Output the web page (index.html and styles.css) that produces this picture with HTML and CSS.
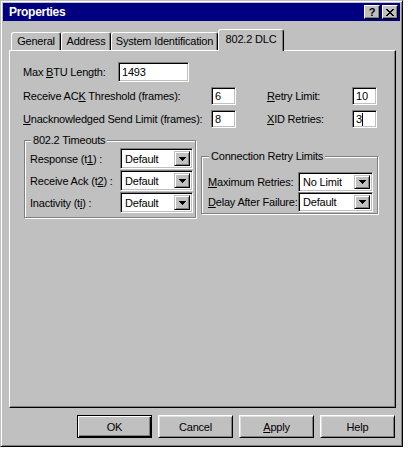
FILE: index.html
```html
<!DOCTYPE html>
<html>
<head>
<meta charset="utf-8">
<title>Properties</title>
<link rel="stylesheet" href="styles.css">
</head>
<body>
<div class="window">
  <div class="titlebar">
    <span class="title">Properties</span>
    <div class="title-buttons">
      <span class="tbtn tbtn-help">?</span>
      <span class="tbtn"><svg class="close-x" width="8" height="7" viewBox="0 0 8 7"><path d="M0 0h2v1H0zM6 0h2v1H6zM1 1h2v1H1zM5 1h2v1H5zM2 2h4v1H2zM3 3h2v1H3zM2 4h4v1H2zM1 5h2v1H1zM5 5h2v1H5zM0 6h2v1H0zM6 6h2v1H6z" fill="#000"/></svg></span>
    </div>
  </div>

  <div class="tabs">
    <div class="tab tab-general">General</div>
    <div class="tab tab-address">Address</div>
    <div class="tab tab-sysid">System Identification</div>
    <div class="tab tab-dlc active">802.2 DLC</div>
  </div>

  <div class="panel">
    <div class="row-btu">
      <span class="lbl-btu">Max <u>B</u>TU Length:</span>
      <div class="field field-btu">1493</div>
    </div>

    <div class="limits">
      <span>Receive AC<u>K</u> Threshold (frames):</span>
      <div class="field">6</div>
      <span></span>
      <span><u>R</u>etry Limit:</span>
      <div class="field">10</div>

      <span><u>U</u>nacknowledged Send Limit (frames):</span>
      <div class="field">8</div>
      <span></span>
      <span><u>X</u>ID Retries:</span>
      <div class="field">3<span class="caret"></span></div>
    </div>

    <div class="groups">
      <fieldset class="group group-timeouts">
        <legend>802.2 Timeouts</legend>
        <div class="combo-grid combo-grid-left">
          <span>Response (t<u>1</u>) :</span>
          <div class="combo"><span class="combo-text">Default</span><span class="combo-btn"><svg width="7" height="4" viewBox="0 0 7 4"><path d="M0 0h7v1H0zM1 1h5v1H1zM2 2h3v1H2zM3 3h1v1H3z" fill="#000"/></svg></span></div>
          <span>Receive Ack (t<u>2</u>) :</span>
          <div class="combo"><span class="combo-text">Default</span><span class="combo-btn"><svg width="7" height="4" viewBox="0 0 7 4"><path d="M0 0h7v1H0zM1 1h5v1H1zM2 2h3v1H2zM3 3h1v1H3z" fill="#000"/></svg></span></div>
          <span>Inactivity (t<u>i</u>) :</span>
          <div class="combo"><span class="combo-text">Default</span><span class="combo-btn"><svg width="7" height="4" viewBox="0 0 7 4"><path d="M0 0h7v1H0zM1 1h5v1H1zM2 2h3v1H2zM3 3h1v1H3z" fill="#000"/></svg></span></div>
        </div>
      </fieldset>

      <fieldset class="group group-retry">
        <legend>Connection Retry Limits</legend>
        <div class="combo-grid combo-grid-right">
          <span><u>M</u>aximum Retries:</span>
          <div class="combo"><span class="combo-text">No Limit</span><span class="combo-btn"><svg width="7" height="4" viewBox="0 0 7 4"><path d="M0 0h7v1H0zM1 1h5v1H1zM2 2h3v1H2zM3 3h1v1H3z" fill="#000"/></svg></span></div>
          <span><u>D</u>elay After Failure:</span>
          <div class="combo"><span class="combo-text">Default</span><span class="combo-btn"><svg width="7" height="4" viewBox="0 0 7 4"><path d="M0 0h7v1H0zM1 1h5v1H1zM2 2h3v1H2zM3 3h1v1H3z" fill="#000"/></svg></span></div>
        </div>
      </fieldset>
    </div>
  </div>

  <div class="buttons">
    <div class="btn btn-default">OK</div>
    <div class="btn">Cancel</div>
    <div class="btn"><u>A</u>pply</div>
    <div class="btn">Help</div>
  </div>
</div>
</body>
</html>
```

FILE: styles.css
```css
* { box-sizing: border-box; }

html, body {
  margin: 0;
  padding: 0;
  background: #ffffff;
}

body {
  font-family: "Liberation Sans", Arial, sans-serif;
  font-size: 11px;
  letter-spacing: -0.2px;
  color: #000;
}

u { text-decoration: underline; text-underline-offset: 1px; }

.window {
  width: 403px;
  height: 447px;
  background: #c0c0c0;
  border: 1px solid;
  border-color: #c0c0c0 #000 #000 #c0c0c0;
  box-shadow: inset 1px 1px #fff, inset -1px -1px #808080;
  padding: 2px;
  display: flex;
  flex-direction: column;
}

/* Title bar */
.titlebar {
  height: 18px;
  background: #000080;
  display: flex;
  align-items: center;
  justify-content: space-between;
  padding: 0 2px 0 6px;
}

.title {
  color: #fff;
  font-weight: bold;
  font-size: 12px;
  letter-spacing: -0.3px;
}

.title-buttons {
  display: flex;
  gap: 2px;
}

.tbtn {
  width: 16px;
  height: 14px;
  background: #c0c0c0;
  border: 1px solid;
  border-color: #fff #000 #000 #fff;
  box-shadow: inset -1px -1px #808080;
  display: flex;
  align-items: center;
  justify-content: center;
}

.tbtn-help {
  font-weight: bold;
  font-size: 11px;
  line-height: 12px;
  letter-spacing: 0;
}

.close-x { display: block; shape-rendering: crispEdges; }

/* Tabs */
.tabs {
  margin: 8px 0 0 6px;
  padding-left: 2px;
  height: 21px;
  display: flex;
  align-items: flex-end;
}

.tab {
  height: 18px;
  background: #c0c0c0;
  border-top: 1px solid #fff;
  border-left: 1px solid #fff;
  border-right: 1px solid #000;
  box-shadow: inset -1px 0 #808080;
  border-radius: 3px 3px 0 0;
  display: flex;
  align-items: center;
  justify-content: center;
  padding-bottom: 1px;
}

.tab-general { width: 50px; }
.tab-address { width: 50px; }
.tab-sysid { width: 107px; }

.tab.active {
  width: 66px;
  height: 22px;
  margin-bottom: -1px;
  position: relative;
  z-index: 1;
  padding-bottom: 3px;
}

/* Panel */
.panel {
  margin: 0 4px 0 6px;
  height: 358px;
  border: 1px solid;
  border-color: #fff #000 #000 #fff;
  box-shadow: inset -1px -1px #808080;
  padding: 11px 0 0 13px;
}

.row-btu {
  display: flex;
  align-items: center;
  height: 20px;
}

.lbl-btu { width: 95px; }

.field {
  height: 18px;
  width: 25px;
  background: #fff;
  border: 1px solid;
  border-color: #808080 #fff #fff #808080;
  box-shadow: inset 1px 1px #000, inset -1px -1px #c0c0c0;
  padding-left: 3px;
  display: flex;
  align-items: center;
}

.field-btu {
  width: 71px;
  height: 20px;
}

.caret {
  display: inline-block;
  width: 1px;
  height: 13px;
  background: #000;
  margin-left: 0;
}

.limits {
  margin-top: 5px;
  display: grid;
  grid-template-columns: 188px 25px 31px 85px 25px;
  grid-auto-rows: 18px;
  row-gap: 5px;
  align-items: center;
}

/* Groups */
.groups {
  margin: 6px 0 0 1px;
  display: flex;
  align-items: flex-start;
}

.group {
  margin: 0;
  border: 1px solid #808080;
  box-shadow: inset 1px 1px #fff, 1px 1px #fff;
  min-width: 0;
}

.group legend {
  padding: 0 2px;
  margin-left: 1px;
  line-height: 13px;
  background: #c0c0c0;
}

.group-timeouts {
  width: 172px;
  padding: 1px 2px 4px 5px;
}

.group-retry {
  width: 177px;
  margin-left: 5px;
  margin-top: 16px;
  padding: 9px 4px 1px 6px;
}

.combo-grid {
  display: grid;
  align-items: center;
}

.combo-grid-left {
  grid-template-columns: 90px 73px;
  grid-auto-rows: 21px;
  row-gap: 1px;
}

.combo-grid-right {
  grid-template-columns: 90px 75px;
  grid-auto-rows: 20px;
}

.combo {
  height: 100%;
  background: #fff;
  border: 1px solid;
  border-color: #808080 #fff #fff #808080;
  box-shadow: inset 1px 1px #000, inset -1px -1px #c0c0c0;
  padding: 2px 2px 2px 4px;
  display: flex;
  align-items: center;
}

.combo-text { flex: 1; }

.combo-btn {
  width: 16px;
  height: 100%;
  background: #c0c0c0;
  border: 1px solid;
  border-color: #c0c0c0 #000 #000 #c0c0c0;
  box-shadow: inset 1px 1px #fff, inset -1px -1px #808080;
  display: flex;
  align-items: center;
  justify-content: center;
}

.combo-btn svg { display: block; shape-rendering: crispEdges; }

/* Buttons */
.buttons {
  margin-top: 7px;
  padding-right: 5px;
  display: flex;
  justify-content: flex-end;
  gap: 6px;
}

.btn {
  width: 75px;
  height: 23px;
  background: #c0c0c0;
  border: 1px solid;
  border-color: #fff #000 #000 #fff;
  box-shadow: inset 1px 1px #dfdfdf, inset -1px -1px #808080;
  display: flex;
  align-items: center;
  justify-content: center;
}

.btn-default {
  border-color: #000;
  box-shadow: inset 1px 1px #fff, inset -1px -1px #000, inset -2px -2px #808080;
}
```
